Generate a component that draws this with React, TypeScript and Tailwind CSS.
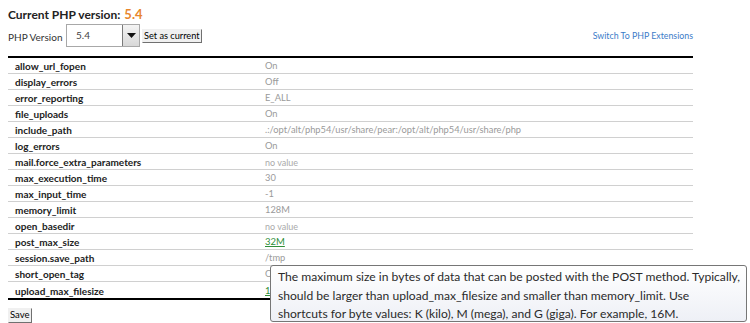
import React from "react";

const rows: [string, string, string?][] = [
  ["allow_url_fopen", "On"],
  ["display_errors", "Off"],
  ["error_reporting", "E_ALL"],
  ["file_uploads", "On"],
  ["include_path", ".:/opt/alt/php54/usr/share/pear:/opt/alt/php54/usr/share/php"],
  ["log_errors", "On"],
  ["mail.force_extra_parameters", "no value", "nv"],
  ["max_execution_time", "30"],
  ["max_input_time", "-1"],
  ["memory_limit", "128M"],
  ["open_basedir", "no value", "nv"],
  ["post_max_size", "32M", "link"],
  ["session.save_path", "/tmp"],
  ["short_open_tag", "On"],
  ["upload_max_filesize", "16M", "link"],
];

export default function App() {
  return (
    <div
      className="relative w-[750px] h-[323px] bg-white overflow-hidden text-black"
      style={{ fontFamily: 'Lato, "Open Sans", sans-serif' }}
    >
      <div className="pl-2 pt-[5px] w-[693px]">
        <div className="flex items-baseline h-[17px]">
          <span className="text-[12px] font-bold text-[#222]">Current PHP version:</span>
          <span className="ml-[4px] text-[13px] font-bold text-[#e8862c]">5.4</span>
        </div>
        <div className="flex items-center mt-[2px] h-[23px]">
          <span className="w-[58px] text-[10px] text-[#333] pt-[3px]">PHP Version</span>
          <div className="w-[74px] h-[23px] border border-[#a8a8a8] flex items-center bg-white">
            <span className="flex-1 pl-[9px] text-[10px] text-[#444]">5.4</span>
            <div className="w-[17px] h-[21px] border-l border-[#7a7a7a] bg-gradient-to-b from-[#f4f4f4] to-[#d8d8d8] flex items-center justify-center">
              <svg width="9" height="5" viewBox="0 0 9 5">
                <path d="M0 0 L9 0 L4.5 5 Z" fill="#111" />
              </svg>
            </div>
          </div>
          <button className="ml-[2px] h-[14px] px-[1px] border border-t-[#f0f0f0] border-l-[#f0f0f0] border-r-[#707070] border-b-[#707070] bg-[#f0f0f0] text-[9.2px] leading-[12px] text-black">
            Set as current
          </button>
          <span className="ml-auto text-[8.8px] text-[#3b7bc8] pt-[1px]">Switch To PHP Extensions</span>
        </div>
        <div className="mt-[9px] border-t-2 border-b-2 border-black">
          {rows.map(([name, value, kind], i) => (
            <div
              key={name}
              className={`flex items-center h-[16px] ${i < rows.length - 1 ? "border-b border-[#d0d0d0]" : ""}`}
            >
              <span className="w-[257px] pl-[7px] pt-[1px] text-[10px] font-bold text-[#222] leading-none">{name}</span>
              {kind === "link" ? (
                <span className="pt-[1px] text-[9.5px] text-[#2f8f3a] underline leading-none">{value}</span>
              ) : (
                <span className={`pt-[1px] leading-none ${kind === "nv" ? "text-[#aaaaaa] text-[9px]" : "text-[#9a9a9a] text-[9.3px]"}`}>{value}</span>
              )}
            </div>
          ))}
        </div>
        <button className="mt-[1px] h-[15px] px-[1px] border border-t-[#f0f0f0] border-l-[#f0f0f0] border-r-[#707070] border-b-[#707070] bg-[#f0f0f0] text-[9.5px] leading-[12px] text-black">
          Save
        </button>
      </div>
      <div className="absolute left-[270px] top-[265px] w-[477px] h-[57px] border border-[#767676] rounded-[3px] bg-gradient-to-b from-white to-[#eef0f6] px-[7px] pt-[2px] text-[12.1px] leading-[18.5px] text-[#2a2a2a] whitespace-nowrap">
        <div>The maximum size in bytes of data that can be posted with the POST method. Typically,</div>
        <div>should be larger than upload_max_filesize and smaller than memory_limit. Use</div>
        <div>shortcuts for byte values: K (kilo), M (mega), and G (giga). For example, 16M.</div>
      </div>
    </div>
  );
}
